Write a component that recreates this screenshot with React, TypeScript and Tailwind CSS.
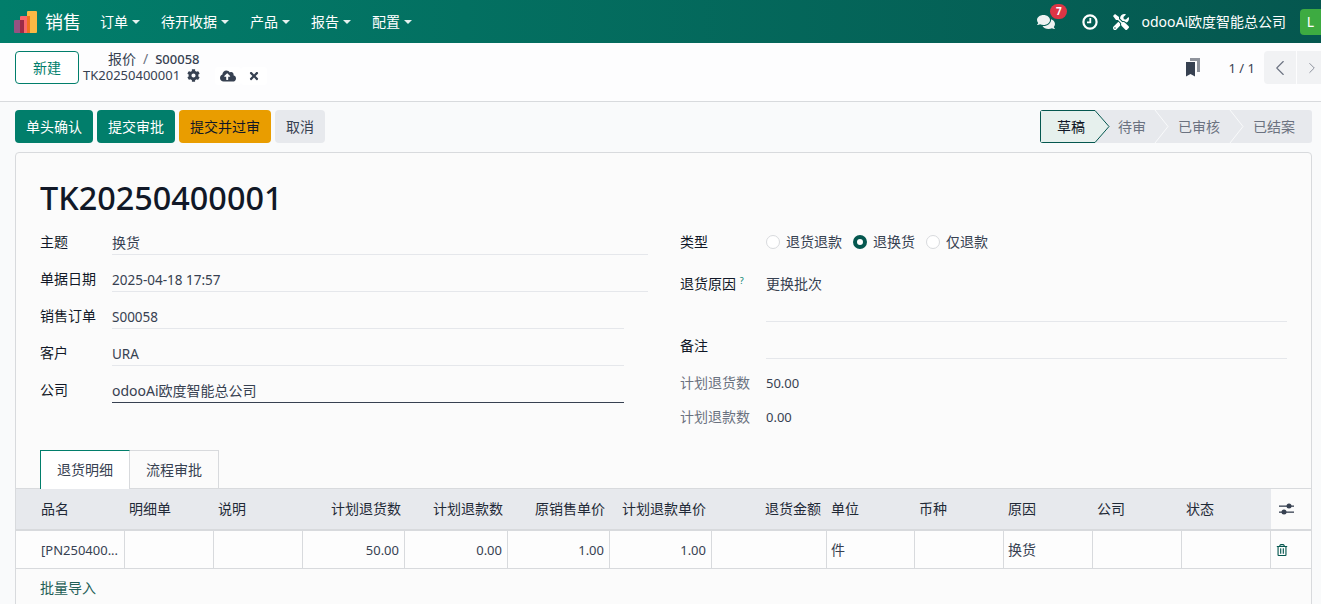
import { ChevronLeft, ChevronRight } from 'lucide-react';
import { FaCog, FaCloudUploadAlt, FaTimes, FaComments, FaTools, FaRegTrashAlt } from 'react-icons/fa';

const menus = ['订单', '待开收据', '产品', '报告', '配置'];
const columns = [
  { name: '品名', width: 'w-[109px]', right: false, pad: '' },
  { name: '明细单', width: 'w-[89px]', right: false, pad: '' },
  { name: '说明', width: 'w-[89px]', right: false, pad: '' },
  { name: '计划退货数', width: 'w-[102px]', right: true, pad: 'pr-[4px]' },
  { name: '计划退款数', width: 'w-[103px]', right: true, pad: 'pr-[5px]' },
  { name: '原销售单价', width: 'w-[102px]', right: true, pad: 'pr-[5px]' },
  { name: '计划退款单价', width: 'w-[102px]', right: true, pad: 'pr-[6px]' },
  { name: '退货金额', width: 'w-[115px]', right: true, pad: 'pr-[6px]' },
  { name: '单位', width: 'w-[88px]', right: false, pad: '' },
  { name: '币种', width: 'w-[89px]', right: false, pad: '' },
  { name: '原因', width: 'w-[89px]', right: false, pad: '' },
  { name: '公司', width: 'w-[89px]', right: false, pad: '' },
  { name: '状态', width: 'w-[89px]', right: false, pad: '' },
];
const rowValues = ['[PN250400...', '', '', '50.00', '0.00', '1.00', '1.00', '', '件', '', '换货', '', ''];

function Caret() {
  return <span className="ml-1 inline-block border-x-[4px] border-t-[4px] border-x-transparent border-t-white/90 align-middle" />;
}

function Logo() {
  return (
    <svg width="24" height="24" viewBox="0 0 24 24">
      <rect x="13" y="1" width="10" height="22" rx="1" fill="#fbb945" />
      <rect x="6" y="6" width="10" height="17" rx="1" fill="#f9686b" />
      <rect x="13" y="6" width="3" height="17" fill="#f0701f" />
      <rect x="0" y="10" width="10" height="13" rx="1" fill="#955281" />
      <rect x="6" y="10" width="4" height="13" fill="#9c2a47" />
    </svg>
  );
}

function Clock() {
  return (
    <svg width="16" height="16" viewBox="0 0 16 16" fill="none" stroke="#fff" strokeWidth="2.2">
      <circle cx="8" cy="8" r="6.6" />
      <path d="M8.3 4v4.3H5" strokeWidth="1.8" />
    </svg>
  );
}

function Bookmarks() {
  return (
    <svg width="14" height="19" viewBox="0 0 14 19">
      <path d="M4 0h10v14h-3V3H4z" fill="#8f939c" />
      <path d="M0 4h9v14.500l-4.500-2.500L0 18.500z" fill="#374151" />
    </svg>
  );
}

function Sliders() {
  return (
    <svg width="15" height="12" viewBox="0 0 15 12" fill="#374151">
      <rect x="0" y="2.500" width="15" height="1.300" />
      <rect x="0" y="8.500" width="15" height="1.300" />
      <circle cx="10" cy="3" r="2.500" />
      <circle cx="5" cy="9" r="2.500" />
    </svg>
  );
}

function StatusArrows() {
  return (
    <svg className="absolute inset-0" width="272" height="33" viewBox="0 0 272 33" fill="none">
      <path d="M0.500 0.500H55L69 16.500L55 32.500H0.500Z" fill="#e6f0ed" stroke="#05574f" />
      <path d="M115 0L128 16.500L115 33" stroke="#f9fafb" />
      <path d="M190 0L203 16.500L190 33" stroke="#f9fafb" />
    </svg>
  );
}

function Field({ label, value, width, dark, latin }: { label: string; value: string; width: string; dark?: boolean; latin?: boolean }) {
  return (
    <div className={`flex h-[37px] ${width}`}>
      <div className="w-[72px] pt-[5px] text-[#111827]">{label}</div>
      <div className={`h-[28px] flex-1 border-b pt-[6px] ${dark ? 'border-[#374151]' : 'border-[#e5e7eb]'} ${latin ? 'text-[13.500px]' : ''}`}>{value}</div>
    </div>
  );
}

function Radio({ label, checked }: { label: string; checked?: boolean }) {
  return (
    <span className="flex items-center gap-[6px]">
      {checked ? (
        <span className="h-[14px] w-[14px] rounded-full border-[4px] border-[#05574f] bg-white" />
      ) : (
        <span className="h-[14px] w-[14px] rounded-full border border-[#d8dadd] bg-white" />
      )}
      {label}
    </span>
  );
}

export default function App() {
  return (
    <div className="h-[604px] w-[1321px] overflow-hidden bg-[#f9fafb] text-[14px] leading-[20px] text-[#374151] [font-family:'Noto_Sans','Noto_Sans_CJK_SC',sans-serif]">
      {/* Navbar */}
      <header className="flex h-[43px] items-center bg-gradient-to-r from-[#017e6b] to-[#05574f] pl-[14px] text-white">
        <Logo />
        <span className="ml-[7px] text-[18px]">销售</span>
        <nav className="ml-[19px] flex gap-[21px]">
          {menus.map(m => (
            <span key={m} className="flex items-center">
              {m}
              <Caret />
            </span>
          ))}
        </nav>
        <div className="ml-auto flex items-center">
          <span className="relative text-[#eef2f2]">
            <FaComments size={18} />
            <span className="absolute -right-[12px] -top-[9px] flex h-[15px] w-[17px] items-center justify-center rounded-full bg-[#dc3545] text-[10px] font-bold text-white">7</span>
          </span>
          <span className="ml-[27px]"><Clock /></span>
          <span className="ml-[15px]"><FaTools size={16} /></span>
          <span className="ml-[12px]">odooAi欧度智能总公司</span>
          <span className="ml-[14px] flex h-[26px] w-[21px] items-center justify-center rounded-l-[4px] bg-[#3dab41]">L</span>
        </div>
      </header>

      {/* Control panel */}
      <div className="flex h-[59px] border-b border-[#d8dadd] bg-[#fdfdfe] pl-[15px] pt-[8px]">
        <button className="h-[33px] w-[64px] rounded-[4px] border border-[#017e6b] bg-white text-[#017e6b]">新建</button>
        <div className="ml-[4px] -mt-px leading-[17px]">
          <div className="pl-[25px]">
            报价<span className="mx-[7px] text-[#6b7280]">/</span><span className="text-[13px] font-medium">S00058</span>
          </div>
          <div className="-mt-px flex h-[17px] items-center text-[13px]">
            TK20250400001
            <FaCog className="ml-[7px]" size={13} />
            <span className="ml-[15px] flex h-[18px] w-[26px] items-center justify-center rounded-[3px] bg-white"><FaCloudUploadAlt size={16} /></span>
            <span className="flex h-[18px] w-[26px] items-center justify-center rounded-[3px] bg-white"><FaTimes size={12} /></span>
          </div>
        </div>
        <div className="ml-auto flex h-[33px] items-center">
          <Bookmarks />
          <span className="ml-[29px] text-[13px]">1 / 1</span>
          <span className="ml-[9px] flex h-[33px] w-[32px] items-center justify-center rounded-l-[4px] bg-[#f1f2f4] text-[#6b7280]"><ChevronLeft size={26} strokeWidth={1} /></span>
          <span className="ml-px flex h-[33px] w-[24px] items-center justify-center bg-[#f1f2f4] pl-[6px] text-[#6b7280]"><ChevronRight size={26} strokeWidth={1} /></span>
        </div>
      </div>

      {/* Action buttons and status bar */}
      <div className="mt-[8px] flex h-[33px] pl-[15px] pr-[9px]">
        <div className="flex gap-[4px]">
          <button className="w-[78px] rounded-[4px] bg-[#017e6b] text-white">单头确认</button>
          <button className="w-[78px] rounded-[4px] bg-[#017e6b] text-white">提交审批</button>
          <button className="w-[92px] rounded-[4px] bg-[#e99d00] text-[#111827]">提交并过审</button>
          <button className="w-[50px] rounded-[4px] bg-[#e7e9ed]">取消</button>
        </div>
        <div className="relative ml-auto flex h-[33px] w-[272px] overflow-hidden rounded-[3px] bg-[#e7e9ed] leading-[33px] text-[#6b7280]">
          <StatusArrows />
          <span className="relative ml-[17px] text-[#111827]">草稿</span>
          <span className="relative ml-[33px]">待审</span>
          <span className="relative ml-[32px]">已审核</span>
          <span className="relative ml-[33px]">已结案</span>
        </div>
      </div>

      {/* Form sheet */}
      <div className="ml-[15px] mt-[9px] h-[470px] w-[1297px] rounded-t-[4px] border border-[#d8dadd] bg-[#fbfbfb]">
        <h1 className="pl-[24px] pt-[23px] text-[32.400px] font-medium leading-[42px] text-[#111827]">TK20250400001</h1>
        <div className="mt-[9px] flex pl-[24px]">
          <div className="w-[640px]">
            <Field label="主题" value="换货" width="w-[608px]" />
            <Field label="单据日期" value="2025-04-18 17:57" width="w-[608px]" latin />
            <Field label="销售订单" value="S00058" width="w-[584px]" latin />
            <Field label="客户" value="URA" width="w-[584px]" latin />
            <Field label="公司" value="odooAi欧度智能总公司" width="w-[584px]" dark />
          </div>
          <div className="w-[607px]">
            <div className="flex h-[28px] pt-[5px]">
              <div className="w-[86px] text-[#111827]">类型</div>
              <div className="flex h-[20px] gap-[11px]">
                <Radio label="退货退款" />
                <Radio label="退换货" checked />
                <Radio label="仅退款" />
              </div>
            </div>
            <div className="mt-[19px] flex h-[48px]">
              <div className="w-[86px] text-[#111827]">退货原因 <sup className="-top-[5px] text-[9px] text-[#017e6b]">?</sup></div>
              <div className="flex-1 border-b border-[#e5e7eb]">更换批次</div>
            </div>
            <div className="flex h-[37px] items-end">
              <div className="h-[28px] w-[86px] pt-[5px] text-[#111827]">备注</div>
              <div className="h-[37px] flex-1 border-b border-[#e5e7eb]" />
            </div>
            <div className="mt-[14px] flex h-[20px]">
              <div className="w-[86px] text-[#6b7280]">计划退货数</div>
              <div className="text-[13px]">50.00</div>
            </div>
            <div className="mt-[14px] flex h-[20px]">
              <div className="w-[86px] text-[#6b7280]">计划退款数</div>
              <div className="text-[13px]">0.00</div>
            </div>
          </div>
        </div>

        {/* Tabs */}
        <div className="mt-[23px] flex h-[38px] pl-[24px]">
          <div className="flex h-[39px] w-[90px] items-center justify-center border-l border-r border-t border-l-[#017e6b] border-r-[#d8dadd] border-t-[#017e6b] bg-white">退货明细</div>
          <div className="flex h-[38px] w-[89px] items-center justify-center border-r border-t border-[#d8dadd]">流程审批</div>
        </div>

        {/* Lines table */}
        <div className="flex h-[41px] border-t border-[#d8dadd]">
          {columns.map(c => (
            <div key={c.name} className={`${c.width} flex shrink-0 items-center bg-[#e7e9ed] pl-[4px] text-[#1f2937] ${c.right ? `justify-end ${c.pad}` : 'justify-start'}`}>
              {c.name === '品名' ? <span className="pl-[21px]">{c.name}</span> : c.name}
            </div>
          ))}
          <div className="flex flex-1 items-center bg-[#fbfbfb] pl-[8px]"><Sliders /></div>
        </div>
        <div className="flex h-[40px] border-b border-t-[2px] border-[#d8dadd] bg-[#fdfdfd]">
          {columns.map((c, i) => (
            <div key={c.name} className={`${c.width} flex shrink-0 items-center border-r border-[#d8dadd] pl-[4px] pr-[5px] ${c.right ? 'justify-end text-[13px]' : 'justify-start'}`}>
              {i === 0 ? <span className="pl-[21px] text-[13px]">{rowValues[i]}</span> : rowValues[i]}
            </div>
          ))}
          <div className="flex flex-1 items-center pl-[5px]"><FaRegTrashAlt size={12} className="text-[#05574f]" /></div>
        </div>
        <div className="pl-[24px] pt-[9px] text-[#1f5f57]">批量导入</div>
      </div>
    </div>
  );
}
